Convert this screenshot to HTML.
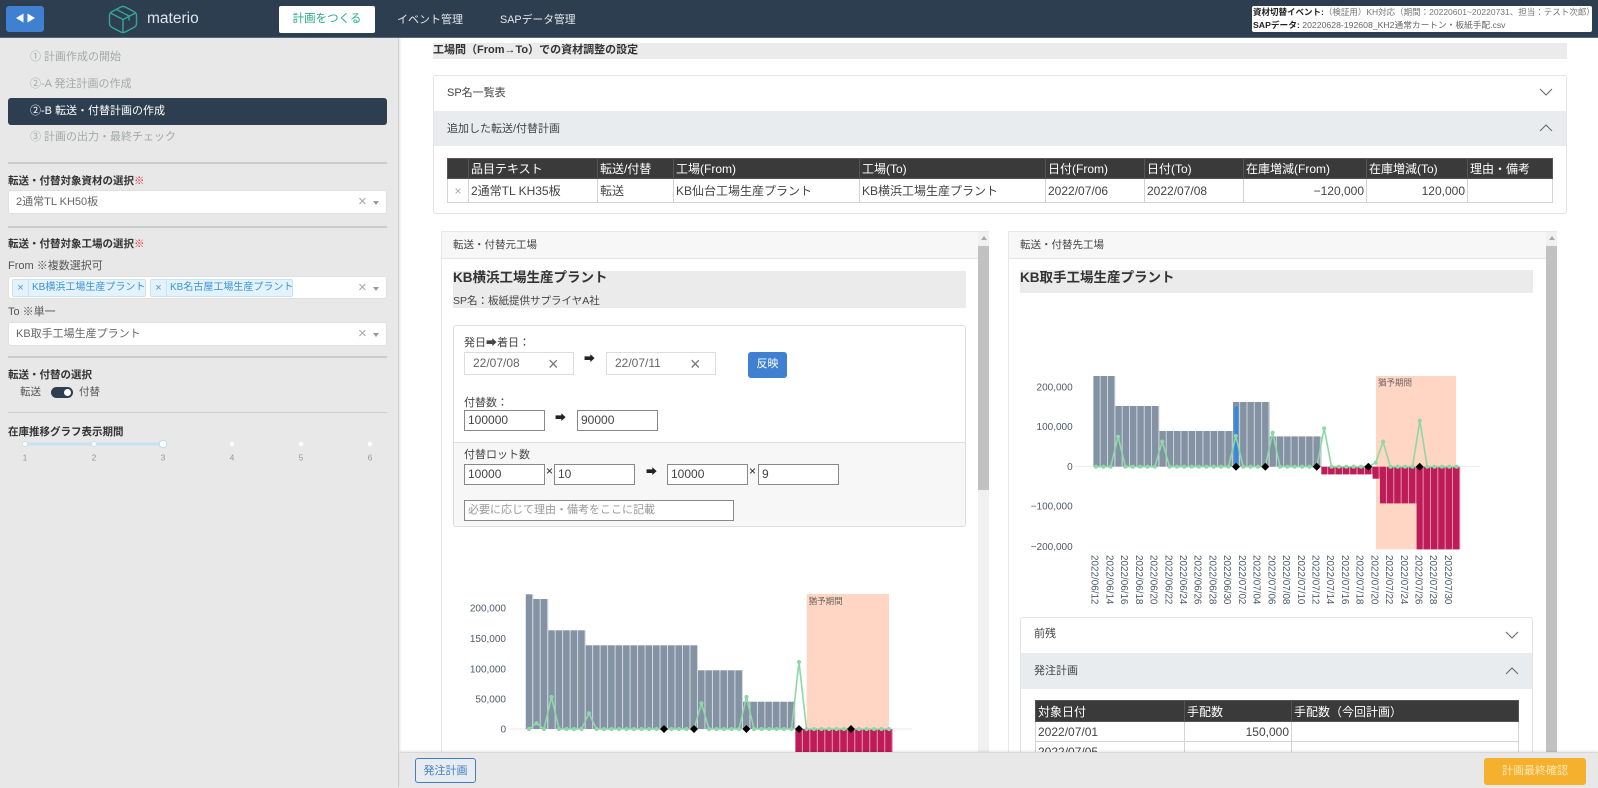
<!DOCTYPE html>
<html lang="ja"><head><meta charset="utf-8"><title>materio</title>
<style>
*{box-sizing:border-box}
html,body{margin:0;padding:0;width:1598px;height:788px;overflow:hidden;background:#fff}
body{position:relative;font-family:"Liberation Sans","Noto Sans CJK JP",sans-serif;color:#444;font-size:11.5px}
.a{position:absolute}
.t{position:absolute;white-space:nowrap;line-height:16px;height:16px}
.b{font-weight:700;color:#333}
.sel{position:absolute;left:8px;width:379px;background:#fff;border:1px solid #e0e0e0;border-radius:3px}
.x{position:absolute;left:349px;top:50%;margin-top:-8px;line-height:16px;color:#aaa;font-size:15px}
.ar{position:absolute;left:364px;top:50%;margin-top:-1px;border:3.5px solid transparent;border-top:4px solid #999;border-bottom:0}
.div{position:absolute;left:8px;width:379px;background:#ccc}
.tag{position:absolute;top:2px;height:18px;background:#e4f2fb;border:1px solid #cbe2f2;border-radius:2px;color:#3a93d6;font-size:10px;line-height:16px;white-space:nowrap;overflow:hidden}
.tag i{font-style:normal;display:inline-block;width:16px;text-align:center;border-right:1px solid #cbe2f2;margin-right:3px;color:#4a9ad6;height:16px;font-size:11px;vertical-align:top}
.hd{position:absolute;background:#e9ecef}
table{position:absolute;border-collapse:collapse;table-layout:fixed;font-size:12px;color:#444}
th{background:#3a3a3a;color:#fff;font-weight:400;text-align:left;padding:0 2px;border:1px solid #555;white-space:nowrap;overflow:hidden}
td{border:1px solid #d4d4d4;padding:0 2px;white-space:nowrap;overflow:hidden;background:#fff}
.inp{position:absolute;height:21px;border:1px solid #888;background:#fff;font-size:12px;line-height:19px;padding-left:3px;color:#444}
.date{position:absolute;top:352px;height:23px;width:110px;background:#fff;border:1px solid #ddd;color:#666;font-size:12px;line-height:20px;padding-left:8px}
.date span{position:absolute;left:83px;top:1px;font-size:18px;color:#777}
</style></head><body>

<!-- main -->
<div class="a" style="left:400px;top:38px;width:1198px;height:714px;overflow:hidden;background:#fff">
<div class="a" style="left:-400px;top:-38px;width:1598px;height:788px">
  <div class="a" style="left:433px;top:43px;width:1134px;height:16px;background:#ebebeb"></div>
  <div class="t b" style="left:433px;top:42px;font-size:11px;font-weight:600">工場間（From→To）での資材調整の設定</div>

  <div class="a" style="left:433px;top:75px;width:1134px;height:139px;border:1px solid #e4e4e4;border-radius:3px"></div>
  <div class="hd" style="left:434px;top:111px;width:1132px;height:35px"></div>
  <div class="t" style="left:447px;top:85px;font-size:11px">SP名一覧表</div>
  <div class="t" style="left:447px;top:121px;font-size:11px">追加した転送/付替計画</div>
  <svg class="a" style="left:1539px;top:88px" width="14" height="46"><path d="M1 1l6 6 6-6" fill="none" stroke="#666"/><path d="M1 43l6-6 6 6" fill="none" stroke="#666"/></svg>

  <table style="left:447px;top:158px;width:1105px">
    <colgroup><col style="width:21px"><col style="width:129px"><col style="width:76px"><col style="width:186px"><col style="width:186px"><col style="width:99px"><col style="width:99px"><col style="width:123px"><col style="width:101px"><col style="width:85px"></colgroup>
    <tr style="height:20px"><th></th><th>品目テキスト</th><th>転送/付替</th><th>工場(From)</th><th>工場(To)</th><th>日付(From)</th><th>日付(To)</th><th>在庫増減(From)</th><th>在庫増減(To)</th><th>理由・備考</th></tr>
    <tr style="height:24px"><td style="color:#aaa;text-align:center;padding:0">×</td><td>2通常TL KH35板</td><td>転送</td><td>KB仙台工場生産プラント</td><td>KB横浜工場生産プラント</td><td>2022/07/06</td><td>2022/07/08</td><td style="text-align:right">−120,000</td><td style="text-align:right">120,000</td><td></td></tr>
  </table>

  <!-- left panel -->
  <div class="a" style="left:441px;top:231px;width:548px;height:540px;border:1px solid #e8e8e8;border-bottom:0"></div>
  <div class="a" style="left:442px;top:232px;width:536px;height:27px;background:#f7f7f7;border-bottom:1px solid #e6e6e6"></div>
  <div class="t" style="left:453px;top:237px;font-size:10.5px">転送・付替元工場</div>
  <div class="a" style="left:978px;top:232px;width:11px;height:540px;background:#f1f1f1"></div>
  <div class="a" style="left:978px;top:246px;width:11px;height:244px;background:#c1c1c1"></div>
  <div class="a" style="left:981px;top:236px;border:3px solid transparent;border-bottom:4px solid #aaa;border-top:0"></div>

  <div class="a" style="left:453px;top:271px;width:513px;height:37px;background:#ebebeb"></div>
  <div class="t b" style="left:453px;top:270px;font-size:13.5px;color:#333">KB横浜工場生産プラント</div>
  <div class="t" style="left:453px;top:293px;font-size:10.5px">SP名：板紙提供サプライヤA社</div>

  <div class="a" style="left:453px;top:325px;width:513px;height:202px;border:1px solid #ddd;border-radius:3px;background:#fff"></div>
  <div class="a" style="left:454px;top:442px;width:511px;height:84px;background:#f7f7f7;border-top:1px solid #ddd;border-radius:0 0 3px 3px"></div>
  <div class="t" style="left:464px;top:335px;font-size:11px">発日➡着日：</div>
  <div class="date" style="left:464px">22/07/08<span>×</span></div>
  <div class="t" style="left:584px;top:351px;font-size:11px;color:#222">➡</div>
  <div class="date" style="left:606px">22/07/11<span>×</span></div>
  <div class="a" style="left:748px;top:352px;width:39px;height:26px;background:#3f80d0;border-radius:3px;color:#fff;text-align:center;line-height:25px;font-size:11px">反映</div>
  <div class="t" style="left:464px;top:395px;font-size:11px">付替数：</div>
  <div class="inp" style="left:464px;top:410px;width:81px">100000</div>
  <div class="t" style="left:555px;top:410px;font-size:11px;color:#222">➡</div>
  <div class="inp" style="left:577px;top:410px;width:81px">90000</div>
  <div class="t" style="left:464px;top:447px;font-size:11px">付替ロット数</div>
  <div class="inp" style="left:464px;top:464px;width:81px">10000</div>
  <div class="t" style="left:546px;top:463px;font-size:12px;color:#222">×</div>
  <div class="inp" style="left:554px;top:464px;width:81px">10</div>
  <div class="t" style="left:646px;top:464px;font-size:11px;color:#222">➡</div>
  <div class="inp" style="left:667px;top:464px;width:81px">10000</div>
  <div class="t" style="left:749px;top:463px;font-size:12px;color:#222">×</div>
  <div class="inp" style="left:758px;top:464px;width:81px">9</div>
  <div class="inp" style="left:464px;top:500px;width:270px;color:#999;font-size:11px">必要に応じて理由・備考をここに記載</div>

  <!-- right panel -->
  <div class="a" style="left:1008px;top:231px;width:549px;height:540px;border:1px solid #e8e8e8;border-bottom:0"></div>
  <div class="a" style="left:1009px;top:232px;width:537px;height:27px;background:#f7f7f7;border-bottom:1px solid #e6e6e6"></div>
  <div class="t" style="left:1020px;top:237px;font-size:10.5px">転送・付替先工場</div>
  <div class="a" style="left:1546px;top:232px;width:11px;height:540px;background:#f1f1f1"></div>
  <div class="a" style="left:1546px;top:246px;width:11px;height:526px;background:#c1c1c1"></div>
  <div class="a" style="left:1549px;top:236px;border:3px solid transparent;border-bottom:4px solid #aaa;border-top:0"></div>
  <div class="a" style="left:1020px;top:270px;width:513px;height:23px;background:#ebebeb"></div>
  <div class="t b" style="left:1020px;top:270px;font-size:13.5px;color:#333">KB取手工場生産プラント</div>

  <!-- charts -->
  <svg class="a" style="left:0;top:0" width="1598" height="788" font-family="Liberation Sans, sans-serif">
    <defs>
      <marker id="m" markerUnits="userSpaceOnUse" markerWidth="6" markerHeight="6" refX="3" refY="3"><circle cx="3" cy="3" r="2.1" fill="#8ed8a8"/></marker>
      <pattern id="gl" patternUnits="userSpaceOnUse" x="525.7" y="0" width="7.49" height="10"><rect width="6.7" height="10" fill="#8493a3"/><rect x="6.7" width=".79" height="10" fill="#d5dbe0"/></pattern>
      <pattern id="rl" patternUnits="userSpaceOnUse" x="525.7" y="0" width="7.49" height="10"><rect width="6.7" height="10" fill="#bd1c58"/><rect x="6.7" width=".79" height="10" fill="#e8a0ba"/></pattern>
      <pattern id="gr" patternUnits="userSpaceOnUse" x="1093.3" y="0" width="7.34" height="10"><rect width="6.6" height="10" fill="#8493a3"/><rect x="6.6" width=".74" height="10" fill="#d5dbe0"/></pattern>
      <pattern id="rr" patternUnits="userSpaceOnUse" x="1093.3" y="0" width="7.34" height="10"><rect width="6.6" height="10" fill="#bd1c58"/><rect x="6.6" width=".74" height="10" fill="#e8a0ba"/></pattern>
    </defs>

    <!-- left chart -->
    <rect x="508" y="728.5" width="404" height="1" fill="#eaeaea"/>
    <rect x="806.7" y="594" width="82.3" height="160" fill="#ffd6c4"/>
    <g fill="url(#gl)">
      <rect x="525.7" y="594.3" width="7.5" height="134.7"/>
      <rect x="533.2" y="599" width="15" height="130"/>
      <rect x="548.2" y="630.3" width="37.4" height="98.7"/>
      <rect x="585.6" y="645.3" width="112.4" height="83.7"/>
      <rect x="698" y="670.3" width="44.9" height="58.7"/>
      <rect x="742.9" y="701.7" width="52.4" height="27.3"/>
    </g>
    <rect x="795.3" y="729" width="97.4" height="30" fill="url(#rl)"/>
    <path fill="none" stroke="#8ed8a8" stroke-width="1.6" marker-start="url(#m)" marker-mid="url(#m)" marker-end="url(#m)"
      d="M529 729l7.5-5.7l7.5 5.7l7.5-32l7.5 32h7.5h7.5h7.5l7.5-15.7l7.5 15.7h7.5h7.5h7.5h7.5h7.5h7.5h7.5h7.5h7.5h7.5h7.5h7.5h7.5l7.5-25.7l7.5 25.7h7.5h7.5h7.5h7.5l7.5-32l7.5 32h7.5h7.5h7.5h7.5h7.5l7.5-67l7.5 67h7.5h7.5h7.5h7.5h7.5h7.5h7.5h7.5h7.5h7.5h7.5"/>
    <g fill="#000">
      <path d="M664 725l4 4-4 4-4-4z"/><path d="M694 725l4 4-4 4-4-4z"/><path d="M746.4 725l4 4-4 4-4-4z"/><path d="M799 725l4 4-4 4-4-4z"/><path d="M851 725l4 4-4 4-4-4z"/>
    </g>
    <g font-size="10" fill="#4d5a6a" text-anchor="end">
      <text x="506" y="611.5">200,000</text><text x="506" y="642">150,000</text><text x="506" y="672.5">100,000</text><text x="506" y="702.5">50,000</text><text x="506" y="732.5">0</text>
    </g>
    <text x="808.6" y="604" font-size="8.5" fill="#6d6360" font-family="Noto Sans CJK JP, sans-serif">猶予期間</text>

    <!-- right chart -->
    <rect x="1076" y="466" width="404" height="1" fill="#e8eeee"/>
    <rect x="1376" y="376" width="80" height="173.3" fill="#ffd6c4"/>
    <g fill="url(#gr)">
      <rect x="1093.3" y="376" width="22" height="90.7"/>
      <rect x="1115.3" y="406" width="44" height="60.7"/>
      <rect x="1159.3" y="431" width="73.7" height="35.7"/>
      <rect x="1233" y="402" width="36.7" height="64.7"/>
      <rect x="1269.7" y="436.4" width="51.6" height="30.3"/>
    </g>
    <rect x="1234.3" y="406.7" width="3.8" height="60" fill="#2e8be0"/>
    <g fill="url(#rr)">
      <rect x="1321.3" y="466.7" width="51.3" height="7.7"/>
      <rect x="1372.6" y="466.7" width="7.4" height="12"/>
      <rect x="1380" y="466.7" width="36.6" height="36.7"/>
      <rect x="1416.6" y="466.7" width="43.6" height="82.7"/>
    </g>
    <path fill="none" stroke="#8ed8a8" stroke-width="1.6" marker-start="url(#m)" marker-mid="url(#m)" marker-end="url(#m)"
      d="M1096 466.7h7.36h7.36l7.36-30l7.36 30h7.36h7.36h7.36h7.36l7.36-25l7.36 25h7.36h7.36h7.36h7.36h7.36h7.36h7.36h7.36l7.36-30.7l7.36 30.7h7.36h7.36h7.36l7.36-34l7.36 34h7.36h7.36h7.36h7.36h7.36l7.36-38.3l7.36 38.3h7.36h7.36h7.36h7.36h7.36l7.36-4l7.36-21l7.36 25h7.36h7.36h7.36l7.36-46l7.36 46h7.36h7.36h7.36h7.36"/>
    <g fill="#000">
      <path d="M1236 462.7l4 4-4 4-4-4z"/><path d="M1265.3 462.7l4 4-4 4-4-4z"/><path d="M1316.7 462.7l4 4-4 4-4-4z"/><path d="M1368.3 462.7l4 4-4 4-4-4z"/><path d="M1419.7 462.7l4 4-4 4-4-4z"/>
    </g>
    <g font-size="10" fill="#4d5a6a" text-anchor="end">
      <text x="1072.7" y="390.5">200,000</text><text x="1072.7" y="430">100,000</text><text x="1072.7" y="470">0</text><text x="1072.7" y="509.5">−100,000</text><text x="1072.7" y="550">−200,000</text>
    </g>
    <text x="1378" y="385.7" font-size="8.5" fill="#6d6360" font-family="Noto Sans CJK JP, sans-serif">猶予期間</text>
    <g font-size="9.9" fill="#4d5a6a">
      <text transform="translate(1091.7,555) rotate(90)">2022/06/12</text>
      <text transform="translate(1106.4,555) rotate(90)">2022/06/14</text>
      <text transform="translate(1121.1,555) rotate(90)">2022/06/16</text>
      <text transform="translate(1135.9,555) rotate(90)">2022/06/18</text>
      <text transform="translate(1150.6,555) rotate(90)">2022/06/20</text>
      <text transform="translate(1165.3,555) rotate(90)">2022/06/22</text>
      <text transform="translate(1180,555) rotate(90)">2022/06/24</text>
      <text transform="translate(1194.7,555) rotate(90)">2022/06/26</text>
      <text transform="translate(1209.5,555) rotate(90)">2022/06/28</text>
      <text transform="translate(1224.2,555) rotate(90)">2022/06/30</text>
      <text transform="translate(1238.9,555) rotate(90)">2022/07/02</text>
      <text transform="translate(1253.6,555) rotate(90)">2022/07/04</text>
      <text transform="translate(1268.3,555) rotate(90)">2022/07/06</text>
      <text transform="translate(1283,555) rotate(90)">2022/07/08</text>
      <text transform="translate(1297.8,555) rotate(90)">2022/07/10</text>
      <text transform="translate(1312.5,555) rotate(90)">2022/07/12</text>
      <text transform="translate(1327.2,555) rotate(90)">2022/07/14</text>
      <text transform="translate(1341.9,555) rotate(90)">2022/07/16</text>
      <text transform="translate(1356.6,555) rotate(90)">2022/07/18</text>
      <text transform="translate(1371.4,555) rotate(90)">2022/07/20</text>
      <text transform="translate(1386.1,555) rotate(90)">2022/07/22</text>
      <text transform="translate(1400.8,555) rotate(90)">2022/07/24</text>
      <text transform="translate(1415.5,555) rotate(90)">2022/07/26</text>
      <text transform="translate(1430.2,555) rotate(90)">2022/07/28</text>
      <text transform="translate(1445,555) rotate(90)">2022/07/30</text>
    </g>
  </svg>

  <!-- right accordion -->
  <div class="a" style="left:1020px;top:617px;width:513px;height:160px;border:1px solid #e4e4e4;border-radius:3px"></div>
  <div class="hd" style="left:1021px;top:653px;width:511px;height:36px"></div>
  <div class="t" style="left:1034px;top:626px;font-size:11px">前残</div>
  <div class="t" style="left:1034px;top:663px;font-size:11px">発注計画</div>
  <svg class="a" style="left:1505px;top:631px" width="14" height="46"><path d="M1 1l6 6 6-6" fill="none" stroke="#666"/><path d="M1 43l6-6 6 6" fill="none" stroke="#666"/></svg>
  <table style="left:1035px;top:700px;width:483px">
    <colgroup><col style="width:149px"><col style="width:107px"><col style="width:227px"></colgroup>
    <tr style="height:21px"><th>対象日付</th><th>手配数</th><th>手配数（今回計画）</th></tr>
    <tr style="height:20px"><td>2022/07/01</td><td style="text-align:right">150,000</td><td></td></tr>
    <tr style="height:21px"><td>2022/07/05</td><td></td><td></td></tr>
  </table>
</div>
</div>

<!-- sidebar -->
<div class="a" style="left:0;top:38px;width:399px;height:750px;background:#e8e8e8;border-right:1px solid #d0d0d0;box-shadow:1px 0 2px rgba(0,0,0,.12)"></div>
<div class="t" style="left:30px;top:49px;font-size:11px;color:#a3a8a8">① 計画作成の開始</div>
<div class="t" style="left:30px;top:76px;font-size:11px;color:#a3a8a8">②-A 発注計画の作成</div>
<div class="a" style="left:8px;top:98px;width:379px;height:27px;background:#2c3e50;border-radius:3px"></div>
<div class="t" style="left:30px;top:103px;font-size:11px;color:#fff">②-B 転送・付替計画の作成</div>
<div class="t" style="left:30px;top:129px;font-size:11px;color:#a3a8a8">③ 計画の出力・最終チェック</div>
<div class="div" style="top:162px;height:2px"></div>
<div class="t b" style="left:8px;top:173px;font-size:10.5px">転送・付替対象資材の選択<span style="color:#e33">※</span></div>
<div class="sel" style="top:190px;height:24px"><div class="t" style="left:7px;top:3px;font-size:11px;color:#666">2通常TL KH50板</div><span class="x">×</span><span class="ar"></span></div>
<div class="div" style="top:226px;height:2px"></div>
<div class="t b" style="left:8px;top:236px;font-size:10.5px">転送・付替対象工場の選択<span style="color:#e33">※</span></div>
<div class="t" style="left:8px;top:258px;font-size:11px;color:#555">From ※複数選択可</div>
<div class="sel" style="top:276px;height:23px">
  <div class="tag" style="left:3px;width:134px"><i>×</i>KB横浜工場生産プラント</div>
  <div class="tag" style="left:141px;width:143px"><i>×</i>KB名古屋工場生産プラント</div>
  <span class="x">×</span><span class="ar"></span>
</div>
<div class="t" style="left:8px;top:304px;font-size:11px;color:#555">To ※単一</div>
<div class="sel" style="top:322px;height:24px"><div class="t" style="left:7px;top:3px;font-size:11px;color:#666">KB取手工場生産プラント</div><span class="x">×</span><span class="ar"></span></div>
<div class="div" style="top:356px;height:2px"></div>
<div class="t b" style="left:8px;top:367px;font-size:10.5px">転送・付替の選択</div>
<div class="t" style="left:20px;top:384px;font-size:10.5px;color:#555">転送</div>
<div class="a" style="left:51px;top:387px;width:22px;height:11px;background:#2c3e50;border-radius:6px"><div class="a" style="left:13px;top:2px;width:7px;height:7px;background:#fff;border-radius:50%"></div></div>
<div class="t" style="left:79px;top:384px;font-size:10.5px;color:#555">付替</div>
<div class="div" style="top:412px;height:1px"></div>
<div class="t b" style="left:8px;top:424px;font-size:10.5px">在庫推移グラフ表示期間</div>
<svg class="a" style="left:0;top:436px" width="399" height="30" font-family="Liberation Sans, sans-serif">
  <rect x="25" y="6.5" width="138" height="3" fill="#c6e3f0"/>
  <circle cx="25" cy="8" r="2.5" fill="#fff" stroke="#c6e3f0"/><circle cx="94" cy="8" r="2.5" fill="#fff" stroke="#c6e3f0"/>
  <circle cx="163" cy="8" r="3.8" fill="#fff" stroke="#b8ddef"/>
  <circle cx="232" cy="8" r="2.2" fill="#fff"/><circle cx="301" cy="8" r="2.2" fill="#fff"/><circle cx="370" cy="8" r="2.2" fill="#fff"/>
  <g font-size="8.5" fill="#999" text-anchor="middle"><text x="25" y="24.5">1</text><text x="94" y="24.5">2</text><text x="163" y="24.5">3</text><text x="232" y="24.5">4</text><text x="301" y="24.5">5</text><text x="370" y="24.5">6</text></g>
</svg>

<!-- footer -->
<div class="a" style="left:400px;top:752px;width:1198px;height:36px;background:#e8e8e8;border-top:1px solid #d8d8d8;box-shadow:0 -1px 2px rgba(0,0,0,.1)"></div>
<div class="a" style="left:415px;top:758px;width:61px;height:25px;border:1px solid #3f7fc0;border-radius:3px;color:#3f7fc0;font-size:11px;text-align:center;line-height:24px;background:#e8ecf0">発注計画</div>
<div class="a" style="left:1484px;top:758px;width:102px;height:27px;background:#f5b02e;border-radius:3px;color:#fde8b8;font-size:11px;text-align:center;line-height:27px">計画最終確認</div>

<!-- header -->
<div class="a" style="left:0;top:0;width:1598px;height:38px;background:#2c3e50;border-bottom:1px solid #54677b"></div>
<div class="a" style="left:6px;top:6px;width:38px;height:26px;background:#3f80d0;border-radius:3px"></div>
<svg class="a" style="left:6px;top:6px" width="38" height="26"><path d="M10 12l7.5-4.5v9zM29 12l-7.5-4.5v9z" fill="#fff"/></svg>
<svg class="a" style="left:108px;top:5px" width="30" height="29" viewBox="0 0 30 29" fill="none" stroke="#38a596" stroke-width="1.4" stroke-linejoin="round" stroke-linecap="round"><path d="M12.8 2L4 6.6Q1.5 8 1.5 10.5V18.5Q1.5 21 4 22.4L12.8 27Q15 28 17.2 27L26 22.4Q28.5 21 28.5 18.5V10.5Q28.5 8 26 6.6L17.2 2Q15 1 12.8 2z"/><path d="M2.5 8L15 14.5 27.5 8M15 14.5V27.5M8.5 4.5L21 11V15"/></svg>
<div class="t" style="left:147px;top:11px;font-size:15.5px;color:#dfe5ea">materio</div>
<div class="a" style="left:279px;top:6px;width:96px;height:27px;background:#fff;border-radius:2px;color:#2ba98a;text-align:center;line-height:27px;font-size:11.5px">計画をつくる</div>
<div class="t" style="left:397px;top:12px;font-size:11px;color:#e4e8ec">イベント管理</div>
<div class="t" style="left:500px;top:12px;font-size:10.8px;color:#e4e8ec">SAPデータ管理</div>
<div class="a" style="left:1252px;top:6px;width:340px;height:26px;background:#fff;border-radius:2px"></div>
<div class="t" style="left:1253px;top:4px;font-size:8.5px;color:#777"><b style="color:#222">資材切替イベント:</b>（検証用）KH対応（期間：20220601~20220731、担当：テスト次郎）</div>
<div class="t" style="left:1253px;top:17px;font-size:8.7px;color:#666"><b style="color:#222">SAPデータ:</b> 20220628-192608_KH2通常カートン・板紙手配.csv</div>
</body></html>
